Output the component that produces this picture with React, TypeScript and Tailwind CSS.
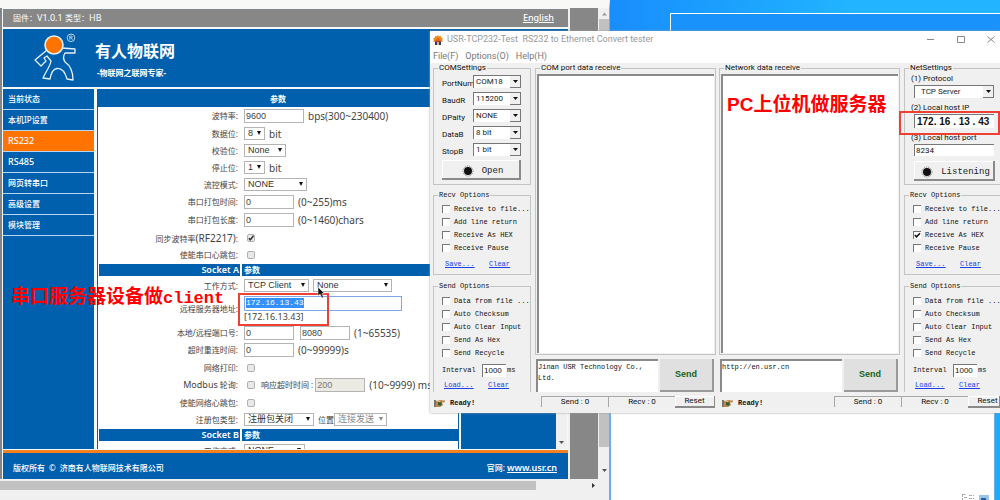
import type { ReactNode } from 'react';
import clsx from 'clsx';

const menuItems = ['当前状态', '本机IP设置', 'RS232', 'RS485', '网页转串口', '高级设置', '模块管理'];

const recvOptions = ['Receive to file...', 'Add line return', 'Receive As HEX', 'Receive Pause'];
const sendOptions = ['Data from file ...', 'Auto Checksum', 'Auto Clear Input', 'Send As Hex', 'Send Recycle'];

const comSettings = [
  { label: 'PortNum', value: 'COM18' },
  { label: 'BaudR', value: '115200' },
  { label: 'DPaity', value: 'NONE' },
  { label: 'DataB', value: '8 bit' },
  { label: 'StopB', value: '1 bit' },
];

/* ---------- Device web page ---------- */

function Row({ label, id, className, children }: { label: ReactNode; id: string; className?: string; children: ReactNode }) {
  return (
    <div className={clsx('grid shrink-0 grid-cols-[142px_1fr] items-center gap-1', className ?? 'h-[17px]')}>
      <label htmlFor={id} className="pr-[2px] text-right text-[8px]">
        {label}
      </label>
      <div className="flex items-center whitespace-nowrap">{children}</div>
    </div>
  );
}

function WebInput({ id, value, className, disabled }: { id: string; value: string; className: string; disabled?: boolean }) {
  return (
    <input
      id={id}
      aria-label={id}
      defaultValue={value}
      disabled={disabled}
      className={clsx(
        "h-[14px] border border-[#b4b4b4] px-px font-['Liberation_Sans','Noto_Sans_CJK_SC',sans-serif] text-[9px] text-[#444] disabled:bg-[#ebebe4] disabled:text-[#777]",
        className
      )}
    />
  );
}

function WebSelect({ id, value, className, disabled }: { id: string; value: string; className: string; disabled?: boolean }) {
  return (
    <span className={clsx('relative inline-block h-[13px]', className)}>
      <select
        id={id}
        aria-label={id}
        disabled={disabled}
        className="block h-full w-full appearance-none border border-[#b4b4b4] bg-white pl-[3px] font-['Liberation_Sans','Noto_Sans_CJK_SC',sans-serif] text-[9px] leading-[11px] text-[#333] disabled:text-[#888]"
      >
        <option>{value}</option>
      </select>
      <svg className="pointer-events-none absolute top-1 right-1 h-1 w-1" viewBox="0 0 4 4" fill={disabled ? '#888' : '#111'}>
        <path d="M0 0H4L2 4Z" />
      </svg>
    </span>
  );
}

function WebCheck({ id, checked }: { id: string; checked?: boolean }) {
  return (
    <span className="relative ml-[3px] block h-2 w-2">
      <input
        id={id}
        type="checkbox"
        defaultChecked={checked}
        className="peer block h-2 w-2 appearance-none rounded-xs border border-[#b0b0b0] bg-[#e9e9e9]"
      />
      <svg className="pointer-events-none absolute inset-0 hidden h-2 w-2 peer-checked:block" viewBox="0 0 8 8" fill="none" stroke="#333" strokeWidth="1.5">
        <path d="M1.8 4.2L3.3 5.8L6.5 1.8" />
      </svg>
    </span>
  );
}

function SocketHeader({ title }: { title: string }) {
  return (
    <div className="my-px ml-px grid h-3 shrink-0 grid-cols-[141px_1fr] gap-[2px] text-[9px] leading-[12px] font-semibold text-white">
      <div className="bg-[#0060ae] pr-px text-right">{title}</div>
      <div className="bg-[#0060ae] pl-[2px] text-[8px]">参数</div>
    </div>
  );
}

function Logo() {
  return (
    <svg className="h-12 w-[44px]" viewBox="0 0 44 48" fill="none" stroke="#e6f1fa" strokeWidth="1.3">
      <path
        d="M13 17L1 27L7 33L12 28L10 25L13 23L17 28C16 34 12 38 9 45L16 46C17 40 19 36 23 35.500C28 35 31 39 33 46L39 47C39 39 37 33 31 29C29 26 29 23 31 20H41V16L28 15"
        strokeLinejoin="round"
      />
      <circle cx="20" cy="12" r="9" fill="#ff7300" strokeWidth="1.6" />
      <circle cx="37" cy="4.800" r="3.800" strokeWidth=".8" />
      <path d="M35.800 6.800V3H37.300C38.700 3 38.700 4.800 37.300 4.800H35.800M37.200 4.800L38.500 6.800" strokeWidth=".7" />
    </svg>
  );
}

function ConfigForm() {
  return (
    <form className="flex min-w-0 flex-1 flex-col overflow-hidden border-x border-[#0060ae] bg-white text-[10px] leading-[12px] text-[#444]">
      <h2 className="h-[18px] shrink-0 bg-[#0060ae] text-center text-[8px] leading-[19px] font-bold text-white">参数</h2>
      <Row label="波特率:" id="baud" className="h-[18px]">
        <WebInput id="baud" value="9600" className="w-[60px]" />
        <span className="ml-1">bps(300~230400)</span>
      </Row>
      <Row label="数据位:" id="data-bits">
        <WebSelect id="data-bits" value="8" className="w-[21px]" />
        <span className="ml-1">bit</span>
      </Row>
      <Row label="校验位:" id="parity">
        <WebSelect id="parity" value="None" className="w-[42px]" />
      </Row>
      <Row label="停止位:" id="stop-bits">
        <WebSelect id="stop-bits" value="1" className="w-[21px]" />
        <span className="ml-1">bit</span>
      </Row>
      <Row label="流控模式:" id="flow">
        <WebSelect id="flow" value="NONE" className="w-[63px]" />
      </Row>
      <Row label="串口打包时间:" id="pack-time" className="h-[18px]">
        <WebInput id="pack-time" value="0" className="w-[50px]" />
        <span className="ml-1">(0~255)ms</span>
      </Row>
      <Row label="串口打包长度:" id="pack-length" className="h-[18px]">
        <WebInput id="pack-length" value="0" className="w-[50px]" />
        <span className="ml-1">(0~1460)chars</span>
      </Row>
      <Row
        label={
          <>
            同步波特率<span className="text-[10px]">(RF2217)</span>:
          </>
        }
        id="sync-baud"
        className="h-[18px]"
      >
        <WebCheck id="sync-baud" checked />
      </Row>
      <Row label="使能串口心跳包:" id="uart-heartbeat" className="h-4">
        <WebCheck id="uart-heartbeat" />
      </Row>

      <SocketHeader title="Socket A" />
      <Row label="工作方式:" id="work-mode">
        <WebSelect id="work-mode" value="TCP Client" className="w-[65px]" />
        <WebSelect id="work-submode" value="None" className="ml-1 w-[79px]" />
      </Row>
      <Row label="远程服务器地址:" id="remote-address" className="h-[30px]">
        <div>
          <div className="flex h-[15px] w-[158px] items-center border border-[#7da7e6] bg-white pl-px">
            <input
              id="remote-address"
              defaultValue="172.16.13.43"
              className="h-[10px] w-[58px] bg-[#3390ff] font-['Liberation_Mono',monospace] text-[8px] text-white outline-none"
            />
          </div>
          <div className="text-[9px]">[172.16.13.43]</div>
        </div>
      </Row>
      <Row label="本地/远程端口号:" id="local-port">
        <WebInput id="local-port" value="0" className="w-[50px]" />
        <WebInput id="remote-port" value="8080" className="ml-[6px] w-[50px]" />
        <span className="ml-1">(1~65535)</span>
      </Row>
      <Row label="超时重连时间:" id="reconnect" className="h-[18px]">
        <WebInput id="reconnect" value="0" className="w-[50px]" />
        <span className="ml-1">(0~99999)s</span>
      </Row>
      <Row label="网络打印:" id="net-print">
        <WebCheck id="net-print" />
      </Row>
      <Row
        label={
          <>
            <span className="text-[9px]">Modbus</span> 轮询:
          </>
        }
        id="modbus"
        className="h-[18px]"
      >
        <WebCheck id="modbus" />
        <label htmlFor="response-timeout" className="mr-[2px] ml-[6px] text-[8px]">
          响应超时时间 :
        </label>
        <WebInput id="response-timeout" value="200" disabled className="w-[50px]" />
        <span className="ml-1">(10~9999) ms</span>
      </Row>
      <Row label="使能网络心跳包:" id="net-heartbeat">
        <WebCheck id="net-heartbeat" />
      </Row>
      <Row label="注册包类型:" id="reg-type">
        <WebSelect id="reg-type" value="注册包关闭" className="w-[70px]" />
        <label htmlFor="reg-position" className="ml-1 text-[8px]">
          位置
        </label>
        <WebSelect id="reg-position" value="连接发送" disabled className="w-[53px]" />
      </Row>
      <SocketHeader title="Socket B" />
      <Row label="工作方式:" id="work-mode-b">
        <WebSelect id="work-mode-b" value="NONE" className="w-[61px]" />
      </Row>
    </form>
  );
}

function DevicePage() {
  return (
    <section className="absolute inset-y-0 left-0 flex w-[61%] flex-col border-t-8 border-r border-t-[#f8f8f6] border-r-[#6cb1e6] bg-[#f0f0f0] font-['Noto_Sans','Noto_Sans_CJK_SC',sans-serif]">
      <div className="flex min-h-0 flex-1">
        <div className="flex min-w-0 flex-1 flex-col border-l-2 border-[#858585] bg-[#f4f9fd] pt-px pl-px">
          <div className="flex h-[18px] shrink-0 items-center justify-between bg-[#878787] pr-[14px] pl-[10px] text-[9px] text-white">
            <span>
              <span className="text-[8px]">固件：</span>V1.0.1 <span className="text-[8px]">类型：</span>HB
            </span>
            <a href="#english" className="font-medium underline">
              English
            </a>
          </div>
          <header className="my-[2px] flex h-[58px] shrink-0 items-start bg-[#0060ae] pt-[4px] pl-[31px] text-white">
            <Logo />
            <div className="pt-[6px] pl-[17px]">
              <h1 className="text-[16px] leading-[24px] font-bold">有人物联网</h1>
              <p className="mt-[5px] ml-[2px] text-[8px] leading-[10px] font-bold">-物联网之联网专家-</p>
            </div>
          </header>

          <div className="flex min-h-0 flex-1">
            <nav className="mr-[3px] w-[91px] shrink-0 bg-[#0060ae]">
              {menuItems.map((item) => (
                <a
                  key={item}
                  href={`#${item}`}
                  className={clsx(
                    'block h-[21px] border-b border-[#b5d6ef] pl-[5px] leading-[20px] font-medium text-white',
                    item === 'RS232' && 'bg-[#ff7300]',
                    item.startsWith('RS') ? 'text-[9px]' : 'text-[8px]'
                  )}
                >
                  {item}
                </a>
              ))}
            </nav>
            <ConfigForm />
            <div className="ml-[2px] w-[95px] bg-[#0060ae]" />
            <div className="mr-px flex w-[11px] items-end justify-center bg-[#f0f0f0] pb-1">
              <svg className="h-1 w-[5px]" viewBox="0 0 5 4" fill="#555">
                <path d="M0 0H5L2.500 3Z" />
              </svg>
            </div>
          </div>

          <footer className="mt-px flex h-[29px] shrink-0 items-center justify-between border-t-[3px] border-[#f5811f] bg-[#0060ae] pt-1 pr-[11px] pl-[10px] text-[9px] font-medium text-white">
            <span className="flex gap-1 text-[8px]">
              <span>版权所有</span>
              <span>©</span>
              <span>济南有人物联网技术有限公司</span>
            </span>
            <span>
              <span className="text-[8px]">官网: </span>
              <a href="#usr" className="font-semibold underline">
                www.usr.cn
              </a>
            </span>
          </footer>
        </div>
        <div className="ml-[2px] w-7 bg-[#878787]" />
        <div className="ml-px flex w-[10px] flex-col items-center pt-1">
          <svg className="h-1 w-[5px] shrink-0" viewBox="0 0 5 4" fill="#999">
            <path d="M0 3.500H5L2.500 .5Z" />
          </svg>
          <div className="mt-[3px] mb-[22px] w-full flex-1 bg-[#c1c1c1]" />
          <svg className="mb-[6px] h-1 w-[5px] shrink-0" viewBox="0 0 5 4" fill="#555">
            <path d="M0 0H5L2.500 3Z" />
          </svg>
        </div>
      </div>
      <div className="mt-[2px] mb-[10px] flex h-[9px] items-center">
        <div className="h-full w-[88%] bg-[#c1c1c1]" />
        <svg className="mr-[13px] ml-auto h-[5px] w-1" viewBox="0 0 4 5" fill="#333">
          <path d="M0 0V5L3 2.500Z" />
        </svg>
      </div>
    </section>
  );
}

/* ---------- USR-TCP232-Test window ---------- */

function Group({ title, mono, open, className, children }: { title: string; mono?: boolean; open?: boolean; className?: string; children: ReactNode }) {
  return (
    <fieldset className={clsx('min-w-0 border border-[#c4c4c4]', open && 'border-b-0', className)}>
      <legend className={clsx('ml-1 px-px leading-[10px]', mono ? "font-['Liberation_Mono',monospace] text-[7px]" : 'text-[8px]')}>{title}</legend>
      {children}
    </fieldset>
  );
}

function WinSelect({ id, value, className }: { id: string; value: string; className: string }) {
  return (
    <span className={clsx('relative block border-t border-l border-[#777] bg-white', className)}>
      <select id={id} className="block h-full w-full appearance-none pl-[2px] text-[8px] leading-[12px] text-[#222]">
        <option>{value}</option>
      </select>
      <span className="pointer-events-none absolute inset-y-0 right-0 flex w-[11px] items-center justify-center border-r border-b border-[#777] bg-[#f0f0f0]">
        <svg className="h-[3px] w-[5px]" viewBox="0 0 5 3" fill="#111">
          <path d="M0 0H5L2.500 3Z" />
        </svg>
      </span>
    </span>
  );
}

function WinCheck({ id, label, checked }: { id: string; label: string; checked?: boolean }) {
  return (
    <div className="flex h-[13px] items-center gap-1 whitespace-nowrap">
      <span className="relative block h-2 w-2 shrink-0">
        <input id={id} type="checkbox" defaultChecked={checked} className="peer block h-2 w-2 appearance-none border-t border-l border-[#777] bg-white" />
        <svg className="pointer-events-none absolute inset-0 hidden h-2 w-2 peer-checked:block" viewBox="0 0 8 8" fill="none" stroke="#111" strokeWidth="1.5">
          <path d="M1.800 4L3.500 5.800L7 2.200" />
        </svg>
      </span>
      <label htmlFor={id}>{label}</label>
    </div>
  );
}

function LampButton({ children, className }: { children: ReactNode; className?: string }) {
  return (
    <button
      type="button"
      className={clsx(
        "flex h-5 items-center justify-center gap-2 border-r-2 border-b-2 border-[#8a8a8a] bg-[#f0f0f0] pt-[3px] pl-1 font-['Liberation_Mono',monospace] text-[9px] leading-[12px] text-[#222] shadow-[inset_1px_1px_#fff]",
        className
      )}
    >
      <svg className="h-3 w-3 shrink-0" viewBox="0 0 12 12">
        <circle cx="6" cy="6" r="5" fill="none" stroke="#777" strokeWidth="1" strokeDasharray="1 1" />
        <circle cx="6" cy="6" r="4" fill="#111" />
      </svg>
      {children}
    </button>
  );
}

function TransferOptions({ side, hex }: { side: string; hex?: boolean }) {
  return (
    <>
      <Group title="Recv Options" mono className="mt-[5px] pb-[5px]">
        <div className="pt-[2px] pl-2 font-['Liberation_Mono',monospace] text-[7px] leading-[10px]">
          {recvOptions.map((option) => (
            <WinCheck key={option} id={`${side}-${option}`} label={option} checked={hex && option === 'Receive As HEX'} />
          ))}
          <div className="mt-[5px] flex pl-[3px] text-[#1b3fe8] underline">
            <a href="#save" className="w-11">Save...</a>
            <a href="#clear">Clear</a>
          </div>
        </div>
      </Group>
      <Group title="Send Options" mono open className="mt-[6px] pb-[2px]">
        <div className="pt-[3px] pl-2 font-['Liberation_Mono',monospace] text-[7px] leading-[10px]">
          {sendOptions.map((option) => (
            <WinCheck key={option} id={`${side}-${option}`} label={option} />
          ))}
          <div className="mt-1 flex h-[14px] items-center">
            <label htmlFor={`${side}-interval`} className="w-10">
              Interval
            </label>
            <input
              id={`${side}-interval`}
              defaultValue="1000"
              className="h-[13px] w-6 border-t border-l border-[#777] bg-white pl-px font-['Liberation_Sans',sans-serif] text-[8px]"
            />
            <span className="ml-px">ms</span>
          </div>
          <div className="mt-[3px] flex pl-[2px] text-[#1b3fe8] underline">
            <a href="#load" className="w-11">Load...</a>
            <a href="#clear">Clear</a>
          </div>
        </div>
      </Group>
    </>
  );
}

function DataPane({ title, text }: { title: string; text: string }) {
  return (
    <div className="flex min-w-0 flex-col pr-[2px] pl-px">
      <Group title={title} className="flex flex-1 flex-col pb-px">
        <textarea
          aria-label={title}
          className="mx-px mt-px block w-auto flex-1 resize-none self-stretch border-t-2 border-l-2 border-[#8a8a8a] bg-white"
        />
      </Group>
      <div className="mt-1 mr-[2px] ml-px flex h-[33px] gap-[2px]">
        <textarea
          aria-label={`${title} - send`}
          defaultValue={text}
          className="min-w-0 flex-1 resize-none overflow-hidden border-t-2 border-l-2 border-[#8a8a8a] bg-white pt-px font-['Liberation_Mono',monospace] text-[7px] leading-[11px]"
        />
        <button
          type="button"
          className="w-[54px] border-r-2 border-b-2 border-[#9a9a9a] bg-[#e0e0e0] font-['Liberation_Sans',sans-serif] text-[9px] font-bold text-[#176317]"
        >
          Send
        </button>
      </div>
    </div>
  );
}

function StatusSection({ className, resetClass }: { className: string; resetClass: string }) {
  return (
    <div className={clsx('flex items-center', className)}>
      <div className="flex flex-1 items-center gap-1 pt-1 font-['Liberation_Mono',monospace] text-[7px] font-bold">
        <svg className="h-[9px] w-3" viewBox="0 0 12 9">
          <path d="M0 1H2V8H0Z" fill="#777" />
          <path d="M2 2L5 1L11 1.500V3L8 3.500L9 6L6 8H2Z" fill="#b98a4a" />
          <path d="M4 3L8 3.500L7 7L4 6Z" fill="#3a5b2d" />
          <path d="M3 1.500L6 2.500" stroke="#eee6c8" />
        </svg>
        Ready!
      </div>
      <div className="h-[11px] w-[67px] border-t border-l border-[#a8a8a8] text-center leading-[10px]">Send : 0</div>
      <div className="h-[11px] w-[67px] border-t border-l border-[#a8a8a8] text-center leading-[10px]">Recv : 0</div>
      <button
        type="button"
        className={clsx('h-3 border-r border-b-2 border-[#8a8a8a] bg-[#f0f0f0] leading-[10px] shadow-[inset_1px_1px_#fff]', resetClass)}
      >
        Reset
      </button>
    </div>
  );
}

function TesterWindow() {
  return (
    <section className="absolute top-[31px] right-0 left-[43%] flex h-[382px] flex-col overflow-hidden bg-[#f0f0f0] font-['Roboto','Liberation_Sans',sans-serif] text-[8px] text-[#111] shadow-[0_0_2px_#999]">
      <div className="shrink-0 bg-white text-[9px]">
        <div className="flex h-[17px] items-center pl-[3px] text-[#999]">
          <svg className="h-[10px] w-[10px]" viewBox="0 0 10 10">
            <path d="M5 0L6.200 1.500L8 .8V2.600L10 3.500L9 5L10 6.500H0L1 5L0 3.500L2 2.600V.8L3.800 1.500Z" fill="#f08a1d" />
            <path d="M2 6H8V10H2Z" fill="#34386b" />
            <path d="M5 3L9 6.500H1Z" fill="#e8641c" />
            <path d="M4 7H6V10H4Z" fill="#f3b46c" />
          </svg>
          <span className="ml-1 whitespace-pre">USR-TCP232-Test  RS232 to Ethernet Convert tester</span>
          <div className="ml-auto flex items-center gap-[22px] pr-[5px]">
            <button type="button" aria-label="Minimize">
              <svg className="h-[9px] w-2" viewBox="0 0 8 9" stroke="#888">
                <path d="M0 4.500H7" />
              </svg>
            </button>
            <button type="button" aria-label="Maximize">
              <svg className="h-[9px] w-2" viewBox="0 0 8 9" fill="none" stroke="#888">
                <path d="M.5 1.500H7.500V7.500H.5Z" />
              </svg>
            </button>
            <button type="button" aria-label="Close">
              <svg className="h-[9px] w-2" viewBox="0 0 8 9" stroke="#888">
                <path d="M.5 1.500L7.500 7.500M7.500 1.500L.5 7.500" />
              </svg>
            </button>
          </div>
        </div>
        <div className="flex h-[15px] items-center gap-[7px] pt-[2px] pl-[3px] text-[#777]">
          <button type="button">File(F)</button>
          <button type="button">Options(O)</button>
          <button type="button">Help(H)</button>
        </div>
      </div>

      <div className="grid shrink-0 grid-cols-[104px_1fr_1fr_98px]">
        <div className="pr-[3px] pl-[3px]">
          <Group title="COMSettings" className="pb-1">
            {comSettings.map((item) => (
              <div key={item.label} className="flex h-[17px] items-center pl-2">
                <label htmlFor={item.label} className="w-[31px] pt-1">
                  {item.label}
                </label>
                <WinSelect id={item.label} value={item.value} className="h-[13px] w-12" />
              </div>
            ))}
            <LampButton className="mt-[2px] ml-2 w-[79px]">Open</LampButton>
          </Group>
          <TransferOptions side="com" />
        </div>

        <DataPane title="COM port data receive" text={'Jinan USR Technology Co.,\nLtd.'} />
        <DataPane title="Network data receive" text="http://en.usr.cn" />

        <div className="-mr-px pl-[2px]">
          <Group title="NetSettings" className="pb-[3px]">
            <div className="pl-[9px] leading-[12px]">
              <label htmlFor="protocol" className="-ml-[3px] block">(1) Protocol</label>
              <WinSelect id="protocol" value="TCP Server" className="h-[13px] w-20 pl-1" />
              <label htmlFor="host-ip" className="mt-1 -ml-[3px] block">(2) Local host IP</label>
              <input
                id="host-ip"
                defaultValue="172. 16 . 13 . 43"
                className="block h-[14px] w-20 border-t border-l border-[#777] bg-white pl-[2px] font-['Liberation_Sans',sans-serif] text-[10px] font-bold"
              />
              <label htmlFor="host-port" className="mt-1 -ml-[3px] block">(3) Local host port</label>
              <input id="host-port" defaultValue="8234" className="block h-3 w-20 border-t border-l border-[#777] bg-white pl-px" />
              <LampButton className="mt-[5px] w-[81px]">Listening</LampButton>
            </div>
          </Group>
          <TransferOptions side="net" hex />
        </div>
      </div>

      <div className="flex flex-1 pb-[2px]">
        <StatusSection className="w-[285px] pl-1" resetClass="w-10" />
        <StatusSection className="flex-1 pl-[7px]" resetClass="w-8 pl-2" />
      </div>
    </section>
  );
}

export default function App() {
  return (
    <main className="relative h-screen w-full overflow-hidden bg-[#1eaaff]">
      <div className="absolute inset-x-0 top-0 h-20 bg-linear-to-r from-[#198bfd] from-60% to-[#22b4ff] to-85%" />
      <div className="absolute top-[13px] right-0 left-[67%] h-20 border-t border-l border-white bg-[#1a92fc]" />

      <DevicePage />

      <div className="absolute right-[5px] bottom-0 left-[61%] flex h-[90px] items-end justify-end gap-[5px] border-x border-[#6cb1e6] bg-white pr-[5px]">
        <svg className="h-[6px] w-3" viewBox="0 0 12 6" fill="none" stroke="#aaa">
          <path d="M.5 0V6M.5 .5H4M2 3.500H5M7 1.500H12M7 4.500H12" strokeDasharray="3 1" />
        </svg>
        <svg className="h-[5px] w-[10px]" viewBox="0 0 10 5">
          <path d="M0 0H10V5H0Z" fill="#9cc4ea" />
          <path d="M2 3H7V5H2Z" fill="#1d5fa8" />
        </svg>
      </div>

      <TesterWindow />

      {/* Annotations */}
      <p className="absolute top-[283px] left-[11px] font-['Noto_Sans_CJK_SC',sans-serif] text-[19px] leading-[24px] font-bold whitespace-nowrap text-[#ff0000]">
        串口服务器设备做<span className="font-['Liberation_Mono',monospace] text-[17px]">client</span>
      </p>
      <p className="absolute top-[93px] left-[727px] font-['Liberation_Sans','Noto_Sans_CJK_SC',sans-serif] text-[19px] leading-[24px] font-bold whitespace-nowrap text-[#ff0000]">
        PC上位机做服务器
      </p>
      <div className="absolute top-[293px] left-[238px] h-[33px] w-[91px] border-2 border-[#ee4136]" />
      <div className="absolute top-[111px] left-[899px] h-6 w-[101px] border-2 border-[#ee4136]" />

      <svg className="absolute top-[287px] left-[317px] h-3 w-2" viewBox="0 0 8 12" fill="#111" stroke="#fff" strokeWidth=".5">
        <path d="M1 0V9L3 7L5 11L6.500 10.300L4.800 6.500H7.500Z" />
      </svg>
    </main>
  );
}
